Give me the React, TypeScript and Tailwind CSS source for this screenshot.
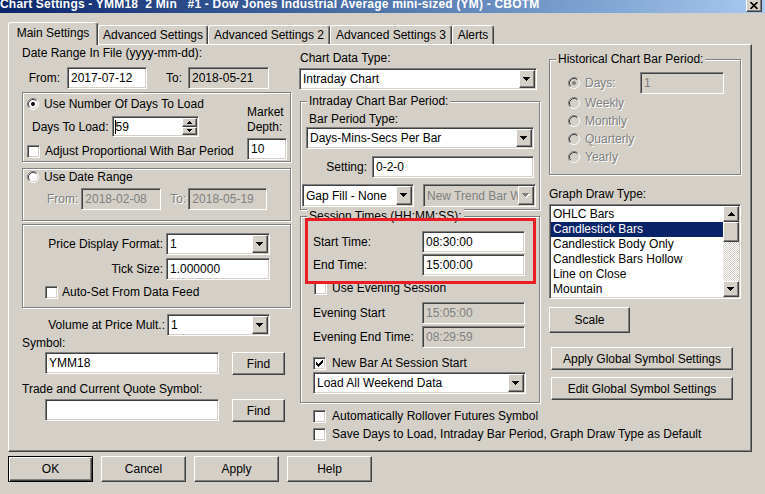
import React from "react";

const sunken =
  "border border-t-[#808080] border-l-[#808080] border-r-white border-b-white shadow-[inset_1px_1px_0_#404040,inset_-1px_-1px_0_#d4d0c8]";
const raised =
  "border border-t-white border-l-white border-r-[#404040] border-b-[#404040] shadow-[inset_-1px_-1px_0_#808080]";
const dis = "text-[#808080] [text-shadow:1px_1px_0_#fff]";

function TextBox({
  children,
  className = "",
  disabled = false,
  readOnly = false,
}: {
  children?: React.ReactNode;
  className?: string;
  disabled?: boolean;
  readOnly?: boolean;
}) {
  return (
    <div
      className={`${sunken} ${className} ${
        disabled ? "bg-[#d4d0c8] text-[#808080]" : readOnly ? "bg-[#d4d0c8]" : "bg-white"
      } flex items-center pl-[3px] whitespace-nowrap overflow-hidden shrink-0`}
    >
      {children}
    </div>
  );
}

function DownArrow({ disabled = false }: { disabled?: boolean }) {
  const c = disabled ? "#808080" : "#000";
  return (
    <svg width="8" height="5" viewBox="0 0 8 5" className="shrink-0">
      {disabled && (
        <g fill="#fff">
          <rect x="1" y="1" width="7" height="1" />
          <rect x="2" y="2" width="5" height="1" />
          <rect x="3" y="3" width="3" height="1" />
          <rect x="4" y="4" width="1" height="1" />
        </g>
      )}
      <g fill={c}>
        <rect x="0" y="0" width="7" height="1" />
        <rect x="1" y="1" width="5" height="1" />
        <rect x="2" y="2" width="3" height="1" />
        <rect x="3" y="3" width="1" height="1" />
      </g>
    </svg>
  );
}

function UpArrow() {
  return (
    <svg width="7" height="4" viewBox="0 0 7 4" className="shrink-0">
      <g fill="#000">
        <rect x="3" y="0" width="1" height="1" />
        <rect x="2" y="1" width="3" height="1" />
        <rect x="1" y="2" width="5" height="1" />
        <rect x="0" y="3" width="7" height="1" />
      </g>
    </svg>
  );
}

function SmallArrow({ up }: { up?: boolean }) {
  return (
    <svg width="5" height="3" viewBox="0 0 5 3" className="shrink-0">
      {up ? (
        <g fill="#000">
          <rect x="2" y="0" width="1" height="1" />
          <rect x="1" y="1" width="3" height="1" />
          <rect x="0" y="2" width="5" height="1" />
        </g>
      ) : (
        <g fill="#000">
          <rect x="0" y="0" width="5" height="1" />
          <rect x="1" y="1" width="3" height="1" />
          <rect x="2" y="2" width="1" height="1" />
        </g>
      )}
    </svg>
  );
}

function Select({
  value,
  className = "",
  disabled = false,
}: {
  value: string;
  className?: string;
  disabled?: boolean;
}) {
  return (
    <div
      className={`${sunken} ${className} ${
        disabled ? "bg-[#d4d0c8]" : "bg-white"
      } flex items-stretch p-[1px] shrink-0`}
    >
      <div
        className={`flex-1 flex items-center pl-[2px] overflow-hidden whitespace-nowrap ${
          disabled ? "text-[#808080]" : ""
        }`}
      >
        {value}
      </div>
      <div className={`${raised} w-[16px] bg-[#d4d0c8] flex items-center justify-center`}>
        <DownArrow disabled={disabled} />
      </div>
    </div>
  );
}

function Check({ checked = false }: { checked?: boolean }) {
  return (
    <div className={`${sunken} w-[13px] h-[13px] bg-white shrink-0 flex items-center justify-center`}>
      {checked && (
        <svg width="7" height="7" viewBox="0 0 7 7">
          <g fill="#000">
            <rect x="0" y="2" width="1" height="3" />
            <rect x="1" y="3" width="1" height="3" />
            <rect x="2" y="4" width="1" height="3" />
            <rect x="3" y="3" width="1" height="3" />
            <rect x="4" y="2" width="1" height="3" />
            <rect x="5" y="1" width="1" height="3" />
            <rect x="6" y="0" width="1" height="3" />
          </g>
        </svg>
      )}
    </div>
  );
}

function Radio({ checked = false, disabled = false }: { checked?: boolean; disabled?: boolean }) {
  return (
    <svg width="12" height="12" viewBox="0 0 12 12" className="shrink-0">
      <circle cx="6" cy="6" r="5" fill={disabled ? "#d4d0c8" : "#fff"} />
      <path d="M2.11 9.89 A5.5 5.5 0 0 1 9.89 2.11" stroke="#808080" fill="none" />
      <path d="M9.89 2.11 A5.5 5.5 0 0 1 2.11 9.89" stroke="#fff" fill="none" />
      <path d="M2.82 9.18 A4.5 4.5 0 0 1 9.18 2.82" stroke="#404040" fill="none" />
      <path d="M9.18 2.82 A4.5 4.5 0 0 1 2.82 9.18" stroke="#d4d0c8" fill="none" />
      {checked && <circle cx="6" cy="6" r="2" fill={disabled ? "#808080" : "#000"} />}
    </svg>
  );
}

function Button({
  children,
  className = "",
  def = false,
}: {
  children: React.ReactNode;
  className?: string;
  def?: boolean;
}) {
  return (
    <div
      className={`${
        def
          ? "border border-black shadow-[inset_1px_1px_0_#fff,inset_-1px_-1px_0_#404040,inset_-2px_-2px_0_#808080]"
          : raised
      } ${className} bg-[#d4d0c8] flex items-center justify-center whitespace-nowrap shrink-0`}
    >
      {children}
    </div>
  );
}

function Group({
  label,
  className = "",
  children,
}: {
  label?: string;
  className?: string;
  children?: React.ReactNode;
}) {
  return (
    <div
      className={`relative border border-[#808080] shadow-[inset_1px_1px_0_#fff,1px_1px_0_#fff] ${className}`}
    >
      {label && (
        <span className="absolute -top-[8px] left-[6px] bg-[#d4d0c8] px-[2px] leading-[14px] whitespace-nowrap">
          {label}
        </span>
      )}
      {children}
    </div>
  );
}

function Tab({
  children,
  active = false,
  className = "",
}: {
  children: React.ReactNode;
  active?: boolean;
  className?: string;
}) {
  return (
    <div
      className={`border-t border-l border-r border-t-white border-l-white border-r-[#404040] shadow-[inset_-1px_0_0_#808080] rounded-t-[3px] bg-[#d4d0c8] flex justify-center whitespace-nowrap shrink-0 ${
        active ? "relative z-10 h-[23px] -mb-[1px] pt-[3px]" : "h-[19px] pt-[2px]"
      } ${className}`}
    >
      {children}
    </div>
  );
}

export default function App() {
  return (
    <div className="w-[765px] h-[494px] bg-[#d4d0c8] overflow-hidden flex flex-col font-['Liberation_Sans',Arial,sans-serif] text-[12px] leading-[14px] text-black">
      {/* Title bar */}
      <div className="h-[13px] shrink-0 bg-gradient-to-r from-[#0a246a] to-[#a6caf0] flex overflow-hidden">
        <div className="flex-1 -mt-[2px] text-white font-bold text-[12px] tracking-[0.2px] leading-[13px] whitespace-pre">
          Chart Settings - YMM18  2 Min   #1 - Dow Jones Industrial Average mini-sized (YM) - CBOTM
        </div>
        <div className={`${raised} bg-[#d4d0c8] w-[16px] h-[14px] -mt-[2px] mr-[3px] flex items-center justify-center`}>
          <svg width="8" height="7" viewBox="0 0 8 7">
            <path d="M0.5 0 L7.5 7 M7.5 0 L0.5 7" stroke="#000" strokeWidth="1.6" />
          </svg>
        </div>
      </div>

      {/* Tabs */}
      <div className="mt-[9px] h-[22px] shrink-0 flex items-end pl-[8px]">
        <Tab active className="w-[90px]">Main Settings</Tab>
        <Tab className="w-[110px]">Advanced Settings</Tab>
        <Tab className="w-[122px]">Advanced Settings 2</Tab>
        <Tab className="w-[122px]">Advanced Settings 3</Tab>
        <Tab className="w-[42px]">Alerts</Tab>
      </div>

      {/* Panel */}
      <div className={`${raised} ml-[8px] w-[744px] h-[408px] shrink-0 flex`}>
        {/* Left column */}
        <div className="ml-[13px] w-[269px] flex flex-col shrink-0">
          <div className="mt-[1px] leading-[14px] whitespace-nowrap">Date Range In File (yyyy-mm-dd):</div>
          <div className="mt-[7px] h-[22px] flex items-center">
            <span className="w-[38px] text-right">From:</span>
            <TextBox className="ml-[7px] w-[80px] h-[22px]">2017-07-12</TextBox>
            <span className="ml-[19px]">To:</span>
            <TextBox readOnly className="ml-[6px] w-[81px] h-[22px]">2018-05-21</TextBox>
          </div>

          <Group className="mt-[3px] h-[70px] flex">
            <div className="flex flex-col pl-[4px]">
              <div className="mt-[4px] h-[14px] flex items-center">
                <Radio checked />
                <span className="ml-[5px] whitespace-nowrap">Use Number Of Days To Load</span>
              </div>
              <div className="mt-[5px] h-[21px] flex items-center">
                <span className="ml-[5px] whitespace-nowrap">Days To Load:</span>
                <div className={`${sunken} ml-[3px] w-[87px] h-[21px] bg-white flex items-stretch p-[1px] shrink-0`}>
                  <div className="flex-1 flex items-center pl-[1px]">
                    <span className="w-[1px] h-[14px] bg-black mr-[0px]" />
                    <span>59</span>
                  </div>
                  <div className="w-[15px] flex flex-col">
                    <div className={`${raised} flex-1 bg-[#d4d0c8] flex items-center justify-center`}>
                      <SmallArrow up />
                    </div>
                    <div className={`${raised} flex-1 bg-[#d4d0c8] flex items-center justify-center`}>
                      <SmallArrow />
                    </div>
                  </div>
                </div>
              </div>
              <div className="mt-[7px] h-[14px] flex items-center">
                <Check />
                <span className="ml-[5px] whitespace-nowrap">Adjust Proportional With Bar Period</span>
              </div>
            </div>
            <div className="ml-auto mr-[2px] w-[41px] flex flex-col">
              <div className="mt-[12px] leading-[15px]">
                Market
                <br />
                Depth:
              </div>
              <TextBox className="mt-[3px] h-[22px] w-[40px]">10</TextBox>
            </div>
          </Group>

          <Group className="mt-[6px] h-[53px] flex flex-col">
            <div className="mt-[1px] h-[14px] flex items-center pl-[4px]">
              <Radio />
              <span className="ml-[5px]">Use Date Range</span>
            </div>
            <div className="mt-[4px] h-[22px] flex items-center">
              <span className={`ml-[24px] ${dis}`}>From:</span>
              <TextBox disabled className="ml-[3px] w-[80px] h-[22px]">2018-02-08</TextBox>
              <span className={`ml-[9px] ${dis}`}>To:</span>
              <TextBox disabled className="ml-[2px] w-[79px] h-[22px]">2018-05-19</TextBox>
            </div>
          </Group>

          <Group className="mt-[3px] h-[84px] flex flex-col">
            <div className="mt-[8px] h-[22px] flex items-center">
              <span className="w-[140px] text-right whitespace-nowrap">Price Display Format:</span>
              <Select value="1" className="ml-[3px] w-[104px] h-[22px]" />
            </div>
            <div className="mt-[3px] h-[22px] flex items-center">
              <span className="w-[140px] text-right">Tick Size:</span>
              <TextBox className="ml-[3px] w-[104px] h-[22px]">1.000000</TextBox>
            </div>
            <div className="mt-[5px] h-[14px] flex items-center pl-[22px]">
              <Check />
              <span className="ml-[4px] whitespace-nowrap">Auto-Set From Data Feed</span>
            </div>
          </Group>

          <div className="mt-[6px] h-[22px] flex items-center">
            <span className="w-[143px] text-right whitespace-nowrap">Volume at Price Mult.:</span>
            <Select value="1" className="ml-[2px] w-[103px] h-[22px]" />
          </div>
          <div className="leading-[14px]">Symbol:</div>
          <div className="mt-[2px] h-[23px] flex items-start">
            <TextBox className="ml-[23px] w-[174px] h-[22px]">YMM18</TextBox>
            <Button className="ml-[13px] w-[53px] h-[23px]">Find</Button>
          </div>
          <div className="mt-[7px] leading-[14px] whitespace-nowrap">Trade and Current Quote Symbol:</div>
          <div className="mt-[3px] h-[23px] flex items-start">
            <TextBox className="ml-[23px] w-[174px] h-[22px]" />
            <Button className="ml-[13px] w-[53px] h-[23px]">Find</Button>
          </div>
        </div>

        {/* Middle column */}
        <div className="ml-[8px] w-[242px] flex flex-col shrink-0">
          <div className="mt-[6px] ml-[1px] leading-[14px]">Chart Data Type:</div>
          <Select value="Intraday Chart" className="mt-[3px] w-[238px] h-[22px]" />

          <Group label="Intraday Chart Bar Period:" className="mt-[11px] ml-[1px] w-[240px] h-[109px] flex flex-col">
            <div className="mt-[10px] ml-[8px] leading-[14px]">Bar Period Type:</div>
            <Select value="Days-Mins-Secs Per Bar" className="mt-[1px] ml-[5px] w-[228px] h-[22px]" />
            <div className="mt-[7px] h-[22px] flex items-center">
              <span className="w-[66px] text-right">Setting:</span>
              <TextBox className="ml-[5px] w-[162px] h-[22px]">0-2-0</TextBox>
            </div>
            <div className="mt-[6px] h-[23px] flex">
              <Select value="Gap Fill - None" className="ml-[1px] w-[112px] h-[23px]" />
              <Select disabled value="New Trend Bar Width" className="ml-[9px] w-[113px] h-[23px]" />
            </div>
          </Group>

          <Group label="Session Times (HH:MM:SS):" className="mt-[6px] ml-[1px] w-[240px] h-[187px] flex flex-col">
            <div className="absolute left-[4px] top-[1px] w-[231px] h-[66px] border-[3px] border-[#ed1c24] z-10" />
            <div className="mt-[14px] h-[22px] flex items-center">
              <span className="ml-[12px] w-[109px]">Start Time:</span>
              <TextBox className="w-[103px] h-[22px]">08:30:00</TextBox>
            </div>
            <div className="mt-[1px] h-[22px] flex items-center">
              <span className="ml-[12px] w-[109px]">End Time:</span>
              <TextBox className="w-[103px] h-[22px]">15:00:00</TextBox>
            </div>
            <div className="mt-[5px] h-[14px] flex items-center ml-[13px]">
              <Check />
              <span className="ml-[5px] whitespace-nowrap">Use Evening Session</span>
            </div>
            <div className="mt-[7px] h-[22px] flex items-center">
              <span className="ml-[12px] w-[109px]">Evening Start</span>
              <TextBox disabled className="w-[103px] h-[22px]">15:05:00</TextBox>
            </div>
            <div className="mt-[2px] h-[22px] flex items-center">
              <span className="ml-[12px] w-[109px] whitespace-nowrap">Evening End Time:</span>
              <TextBox disabled className="w-[103px] h-[22px]">08:29:59</TextBox>
            </div>
            <div className="mt-[8px] h-[14px] flex items-center ml-[12px]">
              <Check checked />
              <span className="ml-[6px] whitespace-nowrap">New Bar At Session Start</span>
            </div>
            <Select value="Load All Weekend Data" className="mt-[2px] ml-[12px] w-[213px] h-[22px]" />
          </Group>

          <div className="mt-[6px] h-[14px] flex items-center ml-[14px]">
            <Check />
            <span className="ml-[6px] whitespace-nowrap">Automatically Rollover Futures Symbol</span>
          </div>
          <div className="mt-[4px] h-[14px] flex items-center ml-[14px]">
            <Check />
            <span className="ml-[6px] whitespace-nowrap">
              Save Days to Load, Intraday Bar Period, Graph Draw Type as Default
            </span>
          </div>
        </div>

        {/* Right column */}
        <div className="ml-[8px] w-[192px] flex flex-col shrink-0">
          <Group label="Historical Chart Bar Period:" className="mt-[14px] w-[192px] h-[116px] flex flex-col">
            <div className="mt-[12px] h-[22px] flex items-center">
              <span className="ml-[18px]">
                <Radio checked disabled />
              </span>
              <span className={`ml-[5px] ${dis}`}>Days:</span>
              <TextBox disabled className="ml-auto mr-[16px] w-[84px] h-[22px]">1</TextBox>
            </div>
            {["Weekly", "Monthly", "Quarterly", "Yearly"].map((t) => (
              <div key={t} className="h-[18px] flex items-center ml-[18px]">
                <Radio disabled />
                <span className={`ml-[5px] ${dis}`}>{t}</span>
              </div>
            ))}
          </Group>

          <div className="mt-[12px] leading-[14px]">Graph Draw Type:</div>
          <div className={`${sunken} mt-[3px] w-[192px] h-[95px] bg-white flex p-[1px]`}>
            <div className="flex-1 flex flex-col pt-[1px]">
              {[
                "OHLC Bars",
                "Candlestick Bars",
                "Candlestick Body Only",
                "Candlestick Bars Hollow",
                "Line on Close",
                "Mountain",
              ].map((t, i) => (
                <div
                  key={t}
                  className={`h-[15px] leading-[15px] pl-[2px] whitespace-nowrap ${
                    i === 1 ? "bg-[#0a246a] text-white" : ""
                  }`}
                >
                  {t}
                </div>
              ))}
            </div>
            <div className="w-[16px] flex flex-col">
              <div className={`${raised} h-[16px] bg-[#d4d0c8] flex items-center justify-center`}>
                <UpArrow />
              </div>
              <div className={`${raised} h-[20px] bg-[#d4d0c8]`} />
              <div className="flex-1 bg-[repeating-conic-gradient(#d4d0c8_0%_25%,#ffffff_0%_50%)] bg-[length:2px_2px]" />
              <div className={`${raised} h-[16px] bg-[#d4d0c8] flex items-center justify-center`}>
                <DownArrow />
              </div>
            </div>
          </div>

          <Button className="mt-[8px] w-[81px] h-[26px]">Scale</Button>
          <Button className="mt-[14px] ml-[2px] w-[182px] h-[23px]">Apply Global Symbol Settings</Button>
          <Button className="mt-[7px] ml-[2px] w-[182px] h-[23px]">Edit Global Symbol Settings</Button>
        </div>
      </div>

      {/* Bottom buttons */}
      <div className="mt-[4px] h-[26px] flex gap-[8px] pl-[8px] shrink-0">
        <Button def className="w-[85px] h-[26px]">OK</Button>
        <Button className="w-[85px] h-[26px]">Cancel</Button>
        <Button className="w-[85px] h-[26px]">Apply</Button>
        <Button className="w-[85px] h-[26px]">Help</Button>
      </div>
    </div>
  );
}
